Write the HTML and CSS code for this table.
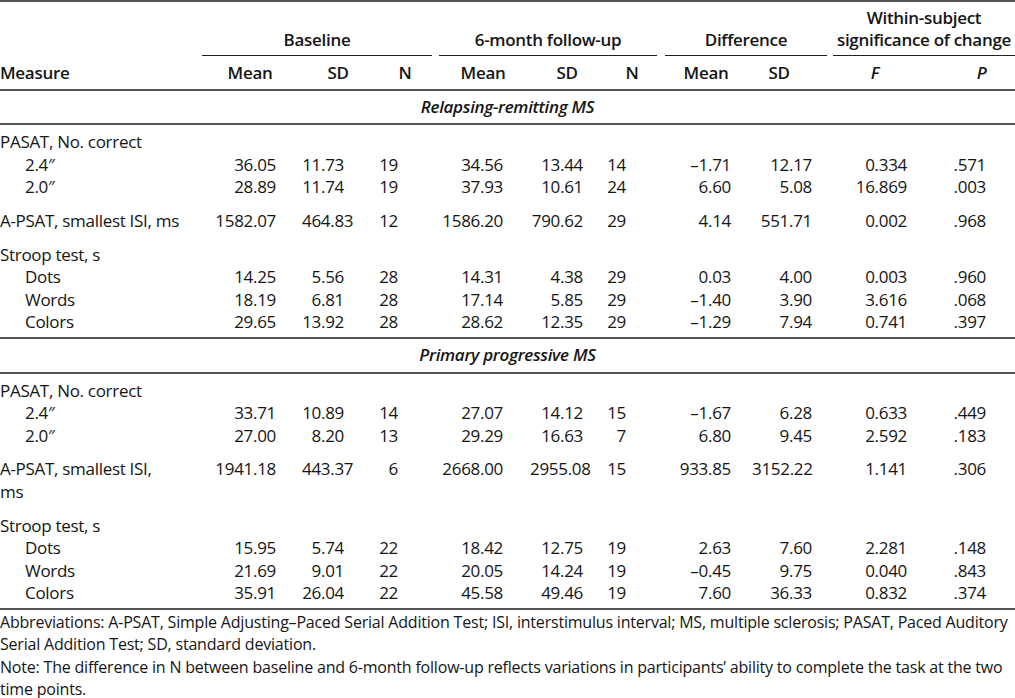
FILE: index.html
```html
<!DOCTYPE html>
<html lang="en">
<head>
<meta charset="utf-8">
<title>Table</title>
<link rel="stylesheet" href="styles.css">
</head>
<body>
<table class="results">
  <colgroup>
    <col><col><col><col><col><col><col><col><col><col><col>
  </colgroup>
  <thead>
    <tr class="spanners">
      <th></th>
      <th colspan="3"><div class="grp grp-first">Baseline</div></th>
      <th colspan="3"><div class="grp">6-month follow-up</div></th>
      <th colspan="2"><div class="grp grp-diff">Difference</div></th>
      <th colspan="2"><div class="grp grp-last">Within-subject<br>significance of change</div></th>
    </tr>
    <tr class="colheads">
      <th>Measure</th>
      <th>Mean</th><th>SD</th><th>N</th>
      <th>Mean</th><th>SD</th><th>N</th>
      <th>Mean</th><th>SD</th>
      <th><i>F</i></th><th><i>P</i></th>
    </tr>
  </thead>
  <tbody>
    <tr class="section"><th colspan="11"><i>Relapsing-remitting MS</i></th></tr>
    <tr class="row first"><td colspan="11">PASAT, No. correct</td></tr>
    <tr class="row"><td class="sub">2.4″</td><td>36.05</td><td>11.73</td><td>19</td><td>34.56</td><td>13.44</td><td>14</td><td>–1.71</td><td>12.17</td><td>0.334</td><td>.571</td></tr>
    <tr class="row"><td class="sub">2.0″</td><td>28.89</td><td>11.74</td><td>19</td><td>37.93</td><td>10.61</td><td>24</td><td>6.60</td><td>5.08</td><td>16.869</td><td>.003</td></tr>
    <tr class="row gs"><td>A-PSAT, smallest ISI, ms</td><td>1582.07</td><td>464.83</td><td>12</td><td>1586.20</td><td>790.62</td><td>29</td><td>4.14</td><td>551.71</td><td>0.002</td><td>.968</td></tr>
    <tr class="row gs"><td colspan="11">Stroop test, s</td></tr>
    <tr class="row"><td class="sub">Dots</td><td>14.25</td><td>5.56</td><td>28</td><td>14.31</td><td>4.38</td><td>29</td><td>0.03</td><td>4.00</td><td>0.003</td><td>.960</td></tr>
    <tr class="row"><td class="sub">Words</td><td>18.19</td><td>6.81</td><td>28</td><td>17.14</td><td>5.85</td><td>29</td><td>–1.40</td><td>3.90</td><td>3.616</td><td>.068</td></tr>
    <tr class="row last"><td class="sub">Colors</td><td>29.65</td><td>13.92</td><td>28</td><td>28.62</td><td>12.35</td><td>29</td><td>–1.29</td><td>7.94</td><td>0.741</td><td>.397</td></tr>

    <tr class="section"><th colspan="11"><i>Primary progressive MS</i></th></tr>
    <tr class="row first"><td colspan="11">PASAT, No. correct</td></tr>
    <tr class="row"><td class="sub">2.4″</td><td>33.71</td><td>10.89</td><td>14</td><td>27.07</td><td>14.12</td><td>15</td><td>–1.67</td><td>6.28</td><td>0.633</td><td>.449</td></tr>
    <tr class="row"><td class="sub">2.0″</td><td>27.00</td><td>8.20</td><td>13</td><td>29.29</td><td>16.63</td><td>7</td><td>6.80</td><td>9.45</td><td>2.592</td><td>.183</td></tr>
    <tr class="row gs"><td>A-PSAT, smallest ISI,<br>ms</td><td>1941.18</td><td>443.37</td><td>6</td><td>2668.00</td><td>2955.08</td><td>15</td><td>933.85</td><td>3152.22</td><td>1.141</td><td>.306</td></tr>
    <tr class="row gs"><td colspan="11">Stroop test, s</td></tr>
    <tr class="row"><td class="sub">Dots</td><td>15.95</td><td>5.74</td><td>22</td><td>18.42</td><td>12.75</td><td>19</td><td>2.63</td><td>7.60</td><td>2.281</td><td>.148</td></tr>
    <tr class="row"><td class="sub">Words</td><td>21.69</td><td>9.01</td><td>22</td><td>20.05</td><td>14.24</td><td>19</td><td>–0.45</td><td>9.75</td><td>0.040</td><td>.843</td></tr>
    <tr class="row last"><td class="sub">Colors</td><td>35.91</td><td>26.04</td><td>22</td><td>45.58</td><td>49.46</td><td>19</td><td>7.60</td><td>36.33</td><td>0.832</td><td>.374</td></tr>
  </tbody>
</table>
<div class="notes">
  <p>Abbreviations: A-PSAT, Simple Adjusting–Paced Serial Addition Test; ISI, interstimulus interval; MS, multiple sclerosis; PASAT, Paced Auditory Serial Addition Test; SD, standard deviation.</p>
  <p>Note: The difference in N between baseline and 6-month follow-up reflects variations in participants’ ability to complete the task at the two time points.</p>
</div>
</body>
</html>
```
FILE: styles.css
```css
html, body {
  margin: 0;
  padding: 0;
  background: #ffffff;
}

body {
  color: #151515;
  font-family: "Open Sans", "Noto Sans", sans-serif;
  font-size: 17px;
  letter-spacing: -0.3px;
}

.results {
  width: 1015px;
  table-layout: fixed;
  border-collapse: separate;
  border-spacing: 0;
  border-top: 2px solid #555;
}

.results col:nth-child(1) { width: 198px; }
.results col:nth-child(2) { width: 104px; }
.results col:nth-child(3) { width: 72px; }
.results col:nth-child(4) { width: 62px; }
.results col:nth-child(5) { width: 94px; }
.results col:nth-child(6) { width: 74px; }
.results col:nth-child(7) { width: 56px; }
.results col:nth-child(8) { width: 92px; }
.results col:nth-child(9) { width: 78px; }
.results col:nth-child(10) { width: 90px; }
.results col:nth-child(11) { width: 95px; }

.results th,
.results td {
  padding: 0;
  line-height: 22.6px;
  vertical-align: top;
  font-weight: 400;
  white-space: nowrap;
}

/* spanner row */
.spanners th {
  vertical-align: bottom;
  padding-top: 5px;
  font-weight: 600;
  text-align: center;
}

.spanners .grp {
  margin: 0 3px;
  padding-bottom: 4px;
  line-height: 22px;
  border-bottom: 1px solid #222;
}

.spanners .grp-first { margin-left: 4px; margin-right: 4px; }
.spanners .grp-diff { margin-left: 5px; }
.spanners .grp-last { margin-right: 0; }

/* column headings */
.colheads th {
  padding-top: 6px;
  padding-bottom: 4px;
  font-weight: 600;
  text-align: center;
  border-bottom: 2px solid #555;
}

.colheads th:nth-child(1) { text-align: left; }
.colheads th:nth-child(9) { padding-right: 24px; }
.colheads th:nth-child(11) { padding-left: 28px; }

/* section headings */
.section th {
  padding-top: 5px;
  padding-bottom: 5px;
  font-weight: 600;
  text-align: center;
  border-bottom: 2px solid #555;
}

/* data rows */
.row td { text-align: right; }
.row td:nth-child(1) { text-align: left; }
.row td.sub { padding-left: 25px; }

.row td:nth-child(2) { padding-right: 26px; }
.row td:nth-child(3) { padding-right: 30px; }
.row td:nth-child(4) { padding-right: 38px; }
.row td:nth-child(5) { padding-right: 27px; }
.row td:nth-child(6) { padding-right: 21px; }
.row td:nth-child(7) { padding-right: 34px; }
.row td:nth-child(8) { padding-right: 21px; }
.row td:nth-child(9) { padding-right: 18px; }
.row td:nth-child(10) { padding-right: 13px; }
.row td:nth-child(11) { padding-right: 29px; }

.row.first td { padding-top: 6px; }
.row.gs td { padding-top: 11px; }
.row.last td {
  padding-bottom: 3px;
  border-bottom: 2px solid #555;
}

/* notes */
.notes {
  margin-top: 1px;
  padding-right: 4px;
  font-size: 16px;
  line-height: 22.5px;
  letter-spacing: -0.2px;
}

.notes p {
  margin: 0;
}
```
